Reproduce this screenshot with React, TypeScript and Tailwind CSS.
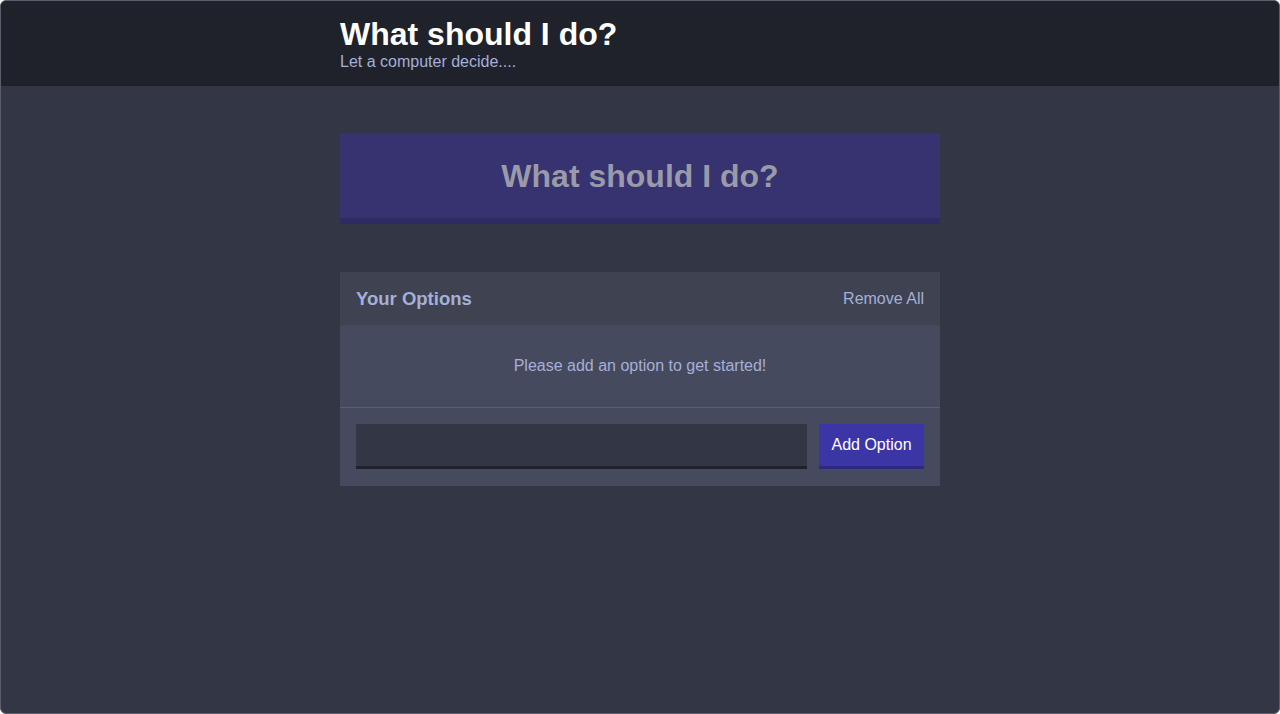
export default function App() {
  return (
    <div
      className="h-[714px] w-[1280px] overflow-hidden bg-[#333745] border border-[#5b5e6b] rounded-[6px] flex flex-col"
      style={{ fontFamily: '"Liberation Sans", Arial, sans-serif' }}
    >
      <header className="h-[85px] bg-[#20222b] shrink-0">
        <div className="w-[600px] mx-auto pt-[14px]">
          <h1 className="text-[32px] leading-[38px] font-bold text-white">What should I do?</h1>
          <h2 className="text-[16px] leading-[18px] text-[#a5afd7]">Let a computer decide....</h2>
        </div>
      </header>
      <main className="w-[600px] mx-auto pt-[48px] flex flex-col">
        <button className="h-[90px] w-full bg-[#363370] border-b-[6px] border-[#2e2b63] text-[32px] font-bold text-[#9a9aa8]">
          What should I do?
        </button>
        <div className="mt-[48px] bg-[#464a5e]">
          <div className="h-[53px] bg-[#3e4251] flex items-center justify-between px-[16px]">
            <h3 className="text-[18.5px] font-bold text-[#a5afd7]">Your Options</h3>
            <button className="text-[16px] text-[#a5afd7]">Remove All</button>
          </div>
          <div className="h-[83px] flex items-center justify-center border-b border-[#5a5e72]">
            <p className="text-[16px] text-[#a5afd7]">Please add an option to get started!</p>
          </div>
          <form className="flex gap-[12px] px-[16px] pt-[16px] pb-[17px]">
            <input className="h-[45px] flex-1 bg-[#333745] border-b-[3px] border-[#20222b] outline-none text-white px-2" />
            <button
              type="button"
              className="h-[45px] w-[105px] bg-[#3c35a5] border-b-[3px] border-[#2d2880] text-white text-[16px]"
            >
              Add Option
            </button>
          </form>
        </div>
      </main>
    </div>
  );
}
